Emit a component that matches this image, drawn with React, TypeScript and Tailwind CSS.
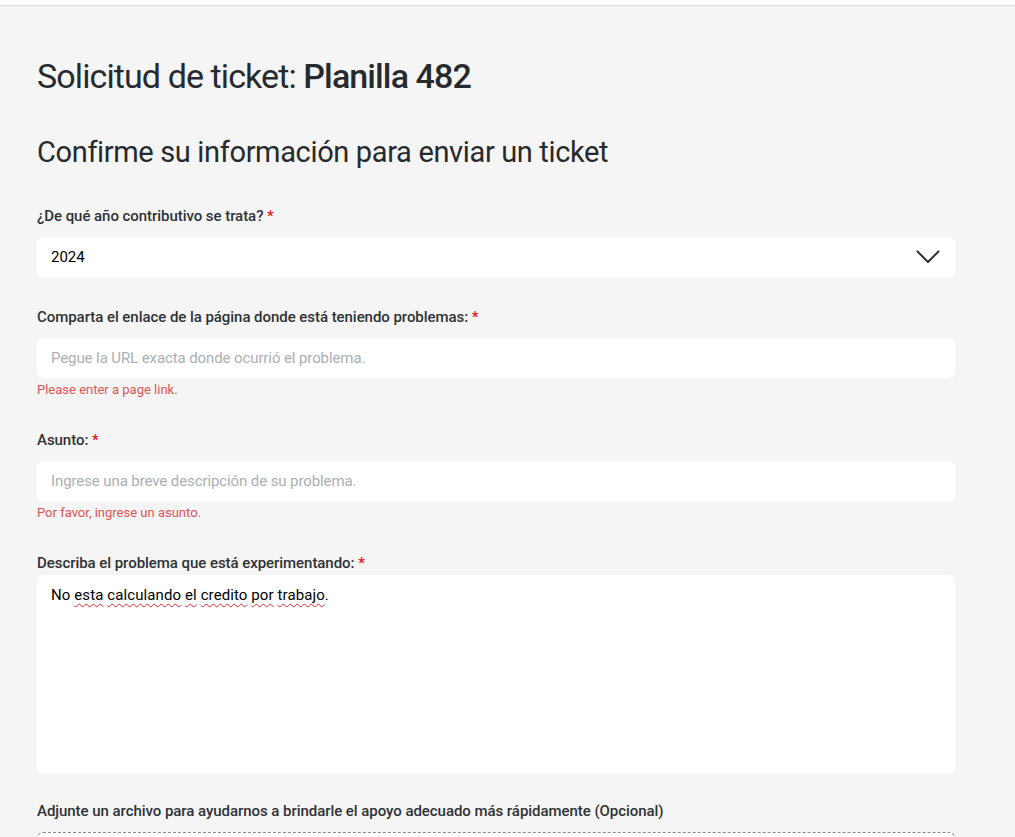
const font = { fontFamily: 'Roboto, "Noto Sans", sans-serif' }

function Label({ text }: { text: string }) {
  return (
    <label className="block text-[15px] leading-5 font-medium tracking-[-0.05px] text-[#2f3235]">
      {text} <span className="text-[#e5141b]">*</span>
    </label>
  )
}

function Wavy({ children }: { children: string }) {
  return (
    <span className="underline decoration-[#e0262b] decoration-wavy decoration-1 underline-offset-[3px]">
      {children}
    </span>
  )
}

export default function App() {
  return (
    <div className="min-h-screen bg-[#f5f5f5]" style={font}>
      {/* top strip */}
      <div className="h-[6px] border-b border-[#dddddd] bg-white" />

      <div className="w-[955px] pt-[50px] pl-[37px]">
        <h1 className="text-[34px] leading-10 tracking-[-0.9px] text-[#262a2e]">
          Solicitud de ticket: <span className="font-medium">Planilla 482</span>
        </h1>

        <h2 className="mt-[38px] text-[29px] leading-9 tracking-[-0.35px] text-[#262a2e]">
          Confirme su información para enviar un ticket
        </h2>

        {/* year */}
        <div className="mt-[36px]">
          <Label text="¿De qué año contributivo se trata?" />
          <div className="mt-[11px] flex h-10 items-center justify-between rounded-md bg-white pr-[15px] pl-[14px]">
            <span className="text-[15px] text-black">2024</span>
            <svg width="24" height="14" viewBox="0 0 24 14" fill="none">
              <path d="M1.5 1.5 L12 12 L22.5 1.5" stroke="#2d2f31" strokeWidth="2" strokeLinecap="round" strokeLinejoin="round" />
            </svg>
          </div>
        </div>

        {/* url */}
        <div className="mt-[30px]">
          <Label text="Comparta el enlace de la página donde está teniendo problemas:" />
          <input
            placeholder="Pegue la URL exacta donde ocurrió el problema."
            className="mt-[11px] block h-10 w-full rounded-md bg-white px-[14px] text-[15px] tracking-[-0.1px] outline-none placeholder:text-[#aab0b5]"
          />
          <p className="mt-1 text-[13px] leading-4 text-[#e05355]">Please enter a page link.</p>
        </div>

        {/* subject */}
        <div className="mt-[32px]">
          <Label text="Asunto:" />
          <input
            placeholder="Ingrese una breve descripción de su problema."
            className="mt-[11px] block h-10 w-full rounded-md bg-white px-[14px] text-[15px] tracking-[-0.1px] outline-none placeholder:text-[#aab0b5]"
          />
          <p className="mt-1 text-[13px] leading-4 text-[#e05355]">Por favor, ingrese un asunto.</p>
        </div>

        {/* description */}
        <div className="mt-[32px]">
          <Label text="Describa el problema que está experimentando:" />
          <div className="mt-[2px] h-[198px] rounded-md bg-white px-[14px] pt-[10px] text-[15px] leading-5 tracking-[0.1px] text-black">
            No <Wavy>esta</Wavy> <Wavy>calculando</Wavy> <Wavy>el</Wavy> <Wavy>credito</Wavy>{' '}
            <Wavy>por</Wavy> <Wavy>trabajo</Wavy>.
          </div>
        </div>

        {/* attachment */}
        <div className="mt-[28px]">
          <p className="text-[15px] leading-5 font-medium tracking-[-0.05px] text-[#2f3235]">
            Adjunte un archivo para ayudarnos a brindarle el apoyo adecuado más rápidamente (Opcional)
          </p>
          <div className="mt-[11px] h-[80px] rounded-md border border-dashed border-[#8c8c8c] bg-white" />
        </div>
      </div>
    </div>
  )
}
